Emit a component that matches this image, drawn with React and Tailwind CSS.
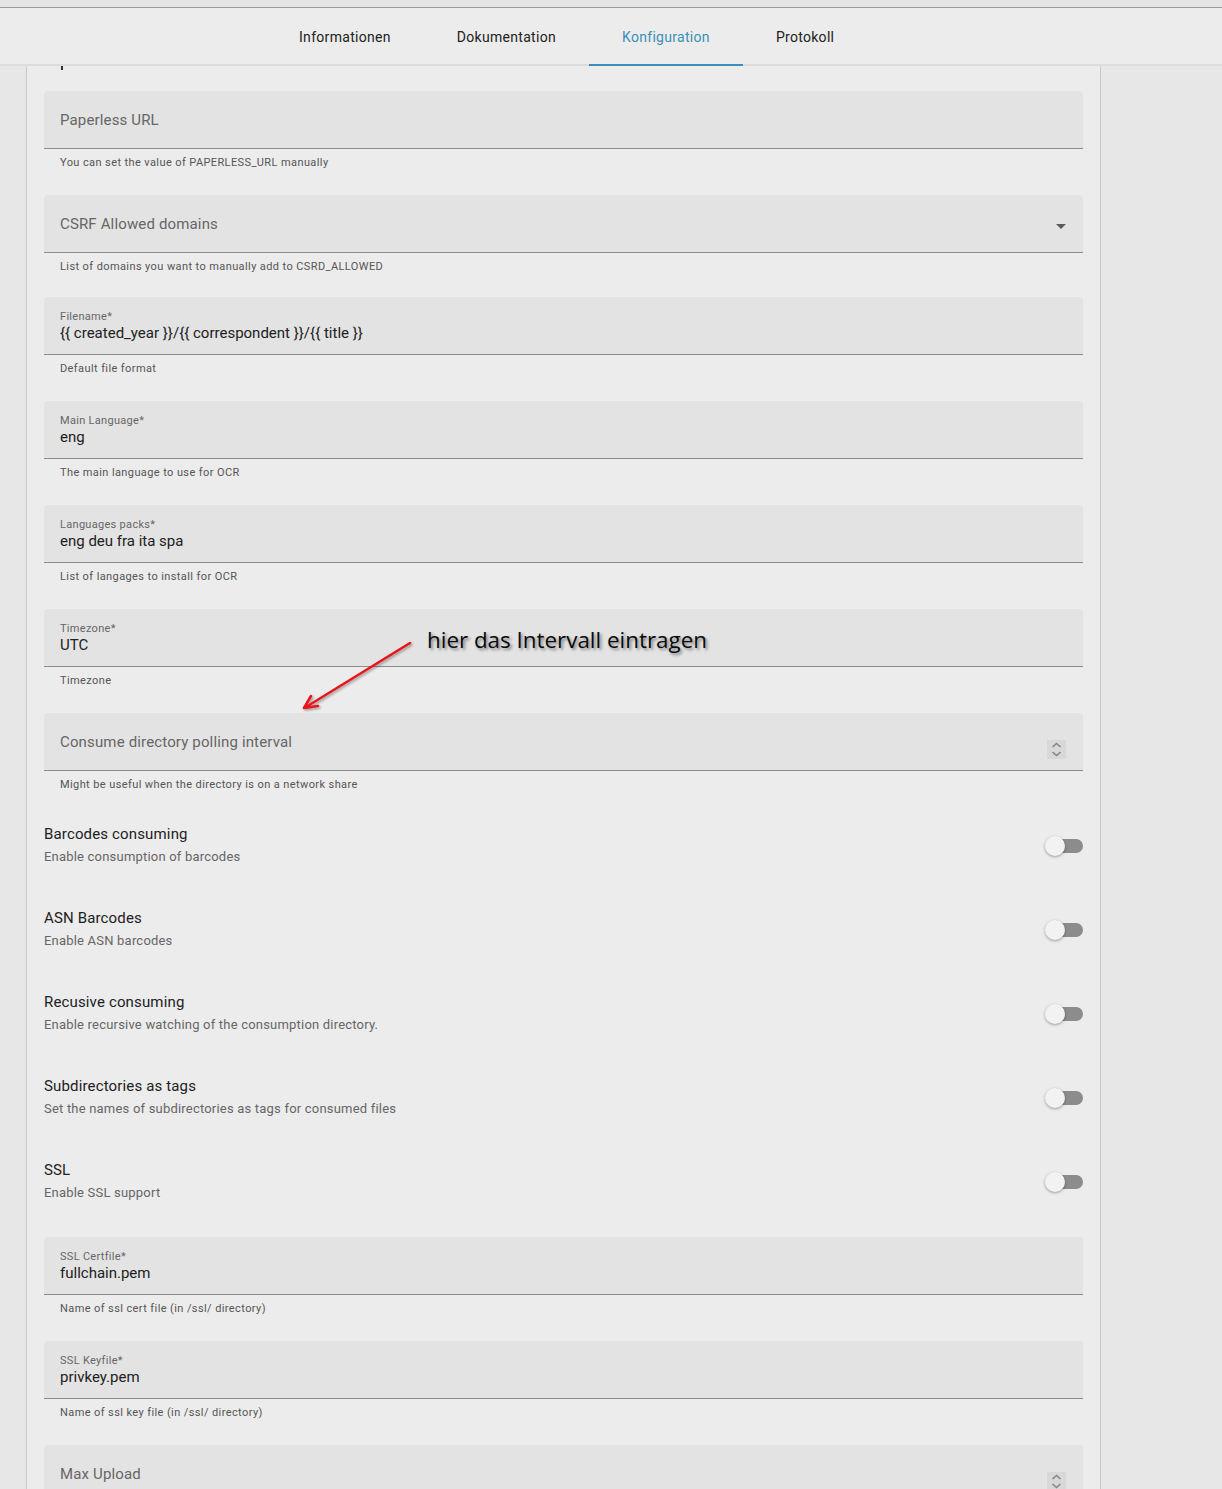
const tabs = ["Informationen", "Dokumentation", "Konfiguration", "Protokoll"];

function Spinner() {
  return (
    <svg width="19" height="19" viewBox="0 0 19 19" className="absolute right-[17px] top-[27px]">
      <rect width="19" height="19" fill="#d8d8d8" />
      <path d="M5.5 7 L9.5 3.5 L13.5 7 M5.5 12 L9.5 15.5 L13.5 12" fill="none" stroke="#858585" strokeWidth="1.6" />
    </svg>
  );
}

function Field({ label, value, helper, kind }) {
  return (
    <div className={kind === "select" ? "mb-[24px]" : "mb-[26px]"}>
      <div className="relative h-[58px] rounded-t-[4px] bg-[#e3e3e3] border-b border-[#8c8c8c] px-4">
        {value === undefined ? (
          <div className="flex h-full items-center pt-[1px] text-[15px] tracking-[0.15px] text-[#666]">{label}</div>
        ) : (
          <div className="pt-[13px]">
            <div className="text-[11px] leading-[14px] tracking-[0.3px] text-[#666]">{label}</div>
            <div className="-mt-[1px] text-[15px] leading-[20px] text-[#212121]">{value}</div>
          </div>
        )}
        {kind === "select" && (
          <div className="absolute right-[17px] top-[29px] h-0 w-0 border-x-[5px] border-t-[5px] border-x-transparent border-t-[#5a5a5a]" />
        )}
        {kind === "number" && <Spinner />}
      </div>
      <div className="mt-[7px] px-4 text-[11px] leading-[13px] tracking-[0.4px] text-[#555]">{helper}</div>
    </div>
  );
}

function Toggle({ title, text }) {
  return (
    <div className="h-[84px] pt-[7px]">
      <div className="flex items-center justify-between">
        <div>
          <div className="text-[15px] leading-[20px] tracking-[0.15px] text-[#212121]">{title}</div>
          <div className="mt-[3px] text-[13px] leading-[20px] tracking-[0.2px] text-[#666]">{text}</div>
        </div>
        <div className="relative h-[14px] w-[36px]">
          <div className="absolute right-0 top-0 h-[14px] w-[34px] rounded-full bg-[#8c8c8c]" />
          <div className="absolute -left-[2px] -top-[3px] h-[20px] w-[20px] rounded-full bg-[#f2f2f2] shadow-[0_1px_3px_rgba(0,0,0,0.35)]" />
        </div>
      </div>
    </div>
  );
}

export default function App() {
  return (
    <div className="relative min-h-screen bg-[#e7e7e7] font-['Roboto',sans-serif]">
      {/* top bar with tabs */}
      <div className="h-[8px] bg-[#e4e4e4] border-b border-[#9b9b9b]" />
      <div className="flex h-[58px] items-stretch bg-[#ececec] border-b-2 border-[#dcdcdc] pl-[266px]">
        {tabs.map((t) => (
          <div
            key={t}
            className={
              t === "Konfiguration"
                ? "relative flex items-center px-[33px] pt-[3px] text-[14px] tracking-[0.3px] text-[#3a90b8]"
                : "relative flex items-center px-[33px] pt-[3px] text-[14px] tracking-[0.3px] text-[#212121]"
            }
          >
            {t}
            {t === "Konfiguration" && <div className="absolute bottom-[-2px] left-0 right-0 h-[2px] bg-[#3a90b8]" />}
          </div>
        ))}
      </div>

      <div className="flex">
        <div className="w-[26px] shrink-0" />
        <div className="w-[1075px] shrink-0 border-x border-[#cacaca] bg-[#ececec] px-[17px] pb-10">
          {/* tail of the section heading scrolled under the tab bar */}
          <div className="h-[25px]">
            <div className="ml-[17px] h-[4px] w-[2px] bg-[#333]" />
          </div>

          <Field label="Paperless URL" helper="You can set the value of PAPERLESS_URL manually" />
          <Field label="CSRF Allowed domains" kind="select" helper="List of domains you want to manually add to CSRD_ALLOWED" />
          <Field label="Filename*" value="{{ created_year }}/{{ correspondent }}/{{ title }}" helper="Default file format" />
          <Field label="Main Language*" value="eng" helper="The main language to use for OCR" />
          <Field label="Languages packs*" value="eng deu fra ita spa" helper="List of langages to install for OCR" />
          <Field label="Timezone*" value="UTC" helper="Timezone" />
          <Field label="Consume directory polling interval" kind="number" helper="Might be useful when the directory is on a network share" />

          <Toggle title="Barcodes consuming" text="Enable consumption of barcodes" />
          <Toggle title="ASN Barcodes" text="Enable ASN barcodes" />
          <Toggle title="Recusive consuming" text="Enable recursive watching of the consumption directory." />
          <Toggle title="Subdirectories as tags" text="Set the names of subdirectories as tags for consumed files" />
          <Toggle title="SSL" text="Enable SSL support" />

          <Field label="SSL Certfile*" value="fullchain.pem" helper="Name of ssl cert file (in /ssl/ directory)" />
          <Field label="SSL Keyfile*" value="privkey.pem" helper="Name of ssl key file (in /ssl/ directory)" />
          <Field label="Max Upload" kind="number" helper="Maximum upload size" />
        </div>
        <div className="flex-1" />
      </div>

      {/* annotation over the form */}
      <div className="absolute left-[427px] top-[625px] font-['Open_Sans',sans-serif] text-[22.4px] leading-[30px] text-[#0a0a0a] [text-shadow:2px_2px_3px_rgba(0,0,0,0.45)]">
        hier das Intervall eintragen
      </div>
      <svg className="absolute left-[296px] top-[636px]" width="124" height="80" viewBox="0 0 124 80">
        <defs>
          <filter id="arrowShadow" x="-20%" y="-20%" width="140%" height="140%">
            <feDropShadow dx="1.5" dy="1.5" stdDeviation="1.2" floodColor="#000" floodOpacity="0.35" />
          </filter>
        </defs>
        <g filter="url(#arrowShadow)" stroke="#e8141b" strokeWidth="2.6" strokeLinecap="round" fill="none">
          <line x1="114" y1="7" x2="10" y2="71" />
          <path d="M8 72 L22 70 M8 72 L15 60" strokeLinejoin="round" />
        </g>
      </svg>
    </div>
  );
}
